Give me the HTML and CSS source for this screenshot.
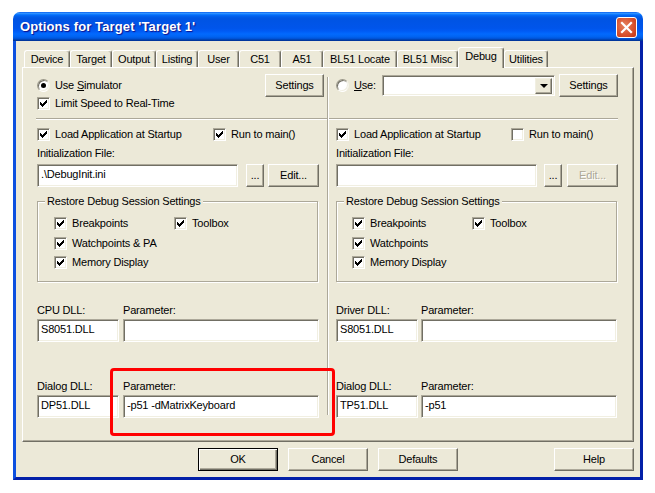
FILE: index.html
```html
<!DOCTYPE html>
<html lang="en">
<head>
<meta charset="utf-8">
<title>Options for Target 'Target 1'</title>
<link rel="stylesheet" href="styles.css">
</head>
<body>
<svg class="defs" width="0" height="0" aria-hidden="true"><symbol id="tick" viewBox="0 0 7 7"><path d="M0 2h1v3H0zM1 3h1v3H1zM2 4h1v3H2zM3 3h1v3H3zM4 2h1v3H4zM5 1h1v3H5zM6 0h1v3H6z"/></symbol></svg>
<div class="window">
  <header class="titlebar">
    <span class="title">Options for Target 'Target 1'</span>
    <span class="close"><svg width="13" height="13" viewBox="0 0 13 13"><path d="M2 2l9 9M11 2l-9 9" stroke="#fff" stroke-width="2.2" stroke-linecap="square" fill="none"/></svg></span>
  </header>
  <div class="client">
    <nav class="tabs">
      <span class="tab t-device">Device</span>
      <span class="tab t-target">Target</span>
      <span class="tab t-output">Output</span>
      <span class="tab t-listing">Listing</span>
      <span class="tab t-user">User</span>
      <span class="tab t-c51">C51</span>
      <span class="tab t-a51">A51</span>
      <span class="tab t-locate">BL51 Locate</span>
      <span class="tab t-misc">BL51 Misc</span>
      <span class="tab active t-debug">Debug</span>
      <span class="tab t-util">Utilities</span>
    </nav>
    <main class="panel">
      <div class="top">
        <section class="top-left">
          <div class="top-opts">
            <div class="opt"><span class="radio on"></span><span>Use <u>S</u>imulator</span></div>
            <div class="opt"><span class="box"><svg class="tick"><use href="#tick"/></svg></span><span>Limit Speed to Real-Time</span></div>
          </div>
          <button class="btn settings">Settings</button>
        </section>
        <section class="top-right">
          <div class="opt use"><span class="radio"></span><span><u>U</u>se:</span></div>
          <div class="combo"><span class="combo-arrow"><i></i></span></div>
          <button class="btn settings">Settings</button>
        </section>
      </div>
      <hr class="rule">
      <div class="cols">
        <section class="col">
          <div class="opt-row load">
            <div class="opt"><span class="box"><svg class="tick"><use href="#tick"/></svg></span><span>Load Application at Startup</span></div>
            <div class="opt"><span class="box"><svg class="tick"><use href="#tick"/></svg></span><span>Run to main()</span></div>
          </div>
          <div class="lbl init">Initialization File:</div>
          <div class="file-row">
            <input class="field file" value=".\DebugInit.ini">
            <button class="btn dots">...</button>
            <button class="btn edit">Edit...</button>
          </div>
          <fieldset class="group">
            <legend>Restore Debug Session Settings</legend>
            <div class="opt-row">
              <div class="opt"><span class="box"><svg class="tick"><use href="#tick"/></svg></span><span>Breakpoints</span></div>
              <div class="opt"><span class="box"><svg class="tick"><use href="#tick"/></svg></span><span>Toolbox</span></div>
            </div>
            <div class="opt second"><span class="box"><svg class="tick"><use href="#tick"/></svg></span><span>Watchpoints &amp; PA</span></div>
            <div class="opt third"><span class="box"><svg class="tick"><use href="#tick"/></svg></span><span>Memory Display</span></div>
          </fieldset>
          <div class="dll first">
            <div class="lbl">CPU DLL:</div><div class="lbl">Parameter:</div>
            <input class="field" value="S8051.DLL"><input class="field" value="">
          </div>
          <div class="dll">
            <div class="lbl">Dialog DLL:</div><div class="lbl">Parameter:</div>
            <input class="field" value="DP51.DLL"><input class="field" value="-p51 -dMatrixKeyboard">
          </div>
        </section>
        <section class="col col-right">
          <div class="opt-row load">
            <div class="opt"><span class="box"><svg class="tick"><use href="#tick"/></svg></span><span>Load Application at Startup</span></div>
            <div class="opt"><span class="box"></span><span>Run to main()</span></div>
          </div>
          <div class="lbl init">Initialization File:</div>
          <div class="file-row">
            <input class="field file" value="">
            <button class="btn dots">...</button>
            <button class="btn edit" disabled>Edit...</button>
          </div>
          <fieldset class="group">
            <legend>Restore Debug Session Settings</legend>
            <div class="opt-row">
              <div class="opt"><span class="box"><svg class="tick"><use href="#tick"/></svg></span><span>Breakpoints</span></div>
              <div class="opt"><span class="box"><svg class="tick"><use href="#tick"/></svg></span><span>Toolbox</span></div>
            </div>
            <div class="opt second"><span class="box"><svg class="tick"><use href="#tick"/></svg></span><span>Watchpoints</span></div>
            <div class="opt third"><span class="box"><svg class="tick"><use href="#tick"/></svg></span><span>Memory Display</span></div>
          </fieldset>
          <div class="dll first">
            <div class="lbl">Driver DLL:</div><div class="lbl">Parameter:</div>
            <input class="field" value="S8051.DLL"><input class="field" value="">
          </div>
          <div class="dll">
            <div class="lbl">Dialog DLL:</div><div class="lbl">Parameter:</div>
            <input class="field" value="TP51.DLL"><input class="field" value="-p51">
          </div>
        </section>
      </div>
      <div class="vline"></div>
      <div class="highlight"></div>
    </main>
    <footer class="footer">
      <button class="btn action default">OK</button>
      <button class="btn action">Cancel</button>
      <button class="btn action">Defaults</button>
      <button class="btn action help">Help</button>
    </footer>
  </div>
</div>
</body>
</html>
```
FILE: styles.css
```css
* { box-sizing: border-box; }
html, body { margin: 0; padding: 0; background: #fff; }
body {
  width: 655px; height: 493px; overflow: hidden;
  font: 11px/16px "Liberation Sans", Arial, sans-serif; color: #000; letter-spacing: -.18px;
}
.defs { display: block; height: 0; }
.window { margin: 12px 0 0 13px; width: 630px; height: 468px; display: flex; flex-direction: column; }

.titlebar {
  height: 29px; flex: none; display: flex; align-items: center; justify-content: space-between;
  padding: 0 6px 0 7px; border-radius: 7px 7px 0 0;
  background: linear-gradient(180deg,#0058ee 0,#3593ff 4%,#288eff 6%,#127dff 8%,#036ffc 10%,#0262ee 14%,#0057e5 20%,#0054e3 24%,#0055eb 56%,#005bf5 66%,#026afe 76%,#0062ef 86%,#0052d6 92%,#0040ab 96%,#003092 100%);
}
.title {
  font: bold 13px/16px "Liberation Sans", Arial, sans-serif; color: #fff;
  text-shadow: 1px 1px 1px #0f1089; letter-spacing: .12px; padding-top: 1px;
}
.close {
  width: 21px; height: 21px; display: flex; align-items: center; justify-content: center;
  border: 1px solid #fff; border-radius: 3px; margin-top: 1px;
  background: radial-gradient(circle at 40% 40%, #e5835f 0, #d9532f 55%, #c33414 100%);
}

.client {
  flex: 1; min-height: 0; background: #ece9d8; padding: 9px 0 0 6px;
  border-style: solid; border-width: 0 3px 3px;
  border-color: #0831d9 #0320a8 #0320a8 #0c50e0;
  display: flex; flex-direction: column;
}

.tabs { display: flex; align-items: flex-end; height: 17px; padding-left: 2px; position: relative; z-index: 1; }
.tab {
  height: 17px; text-align: center; line-height: 16px; background: #ece9d8;
  border: solid; border-width: 1px 1px 0 1px; border-color: #fff #716f64 #fff #fff;
  box-shadow: inset -1px 0 0 #aca899; border-radius: 3px 3px 0 0; flex: none; white-space: nowrap;
}
.t-device { width: 46px; }
.t-target { width: 42px; }
.t-output { width: 44px; }
.t-listing { width: 42px; }
.t-user { width: 41px; }
.t-c51 { width: 42px; }
.t-a51 { width: 42px; }
.t-locate { width: 74px; }
.t-misc { width: 61px; }
.t-debug { width: 46px; }
.t-util { width: 44px; }
.tab.active { height: 21px; margin-bottom: -1px; line-height: 17px; padding-bottom: 3px; }

.panel {
  position: relative; height: 375px; width: 612px; flex: none;
  border: 1px solid; border-color: #fff #716f64 #716f64 #fff;
  box-shadow: inset -1px -1px 0 #aca899; padding: 6px 0 0 14px;
}
.top { display: flex; height: 44px; }
.top-left { width: 287px; display: flex; justify-content: space-between; }
.top-opts { display: flex; flex-direction: column; gap: 2px; padding-top: 3px; }
.top-right { margin-left: 12px; width: 282px; display: flex; align-items: flex-start; }
.use { width: 46px; margin-top: 3px; }
.combo {
  width: 173px; height: 21px; margin-top: 1px; background: #fff; padding: 2px 2px 2px 0;
  border: 1px solid; border-color: #aca899 #fff #fff #aca899;
  box-shadow: inset 1px 1px 0 #716f64, inset -1px -1px 0 #f1efe2; display: flex; justify-content: flex-end;
}
.combo-arrow {
  width: 17px; height: 16px; background: #ece9d8; display: flex; align-items: center; justify-content: center;
  border: 1px solid; border-color: #f1efe2 #716f64 #716f64 #f1efe2; box-shadow: inset -1px -1px 0 #aca899;
}
.combo-arrow i { width: 0; height: 0; border: 4px solid transparent; border-top-color: #000; border-bottom-width: 0; }
.top-right .settings { margin-left: 4px; }

.rule { margin: 0 1px 0 -1px; height: 2px; width: 582px; border: 0; border-top: 1px solid #aca899; border-bottom: 1px solid #fff; }
.cols { display: grid; grid-template-columns: 282px 282px; column-gap: 17px; }
.opt { display: flex; align-items: center; gap: 5px; height: 16px; white-space: nowrap; }
.opt-row { display: flex; }
.opt-row > .opt:first-child { width: 120px; }
.load { margin-top: 6px; }
.load > .opt:first-child { width: 176px; }
.col-right .load > .opt:first-child { width: 175px; }
.box {
  width: 13px; height: 13px; flex: none; background: #fff; display: flex; align-items: center; justify-content: center;
  border: 1px solid; border-color: #aca899 #fff #fff #aca899;
  box-shadow: inset 1px 1px 0 #716f64, inset -1px -1px 0 #f1efe2;
}
.tick { width: 7px; height: 7px; fill: #000; shape-rendering: crispEdges; }
.radio {
  width: 13px; height: 13px; flex: none; border-radius: 50%; position: relative; background: #fff;
  border: 1px solid; border-color: #9a9788 #f5f4ea #fff #9a9788;
  box-shadow: inset 1px 1px 0 #716f64, inset -1px -1px 0 #f1efe2;
}
.radio.on::after {
  content: ""; position: absolute; left: 3px; top: 3px; width: 5px; height: 5px; border-radius: 50%; background: #000;
}
.lbl { height: 14px; line-height: 14px; white-space: nowrap; }
.init { margin-top: 4px; }
.field {
  display: block; width: 100%; height: 23px; margin: 0; padding: 0 3px 3px; background: #fff; outline: 0;
  font: inherit; letter-spacing: inherit; color: #000; border-radius: 0; appearance: none;
  border: 1px solid; border-color: #aca899 #fff #fff #aca899;
  box-shadow: inset 1px 1px 0 #716f64, inset -1px -1px 0 #f1efe2;
}
.file-row { display: flex; margin-top: 4px; }
.file { width: 201px; }
.btn {
  height: 23px; margin: 0; padding: 0 0 2px; background: #ece9d8; font: inherit; letter-spacing: inherit; color: #000; flex: none; border-radius: 0;
  border: 1px solid; border-color: #fff #716f64 #716f64 #fff; box-shadow: inset -1px -1px 0 #aca899;
}
.settings { width: 59px; }
.dots { width: 18px; margin: 0 4px 0 8px; }
.col-right .dots { margin: 0 5px 0 7px; }
.edit { width: 51px; }
.edit:disabled { color: #aca899; text-shadow: 1px 1px 0 #fff; }

.group {
  margin: 7px 0 0; padding: 7px 0 0 16px; height: 88px; width: 281px; min-width: 0;
  border: 1px solid #aca899; border-radius: 0;
  box-shadow: 1px 1px 0 #fff, inset 1px 1px 0 #fff;
}
.col-right .group { padding-left: 15px; }
.group legend { margin-left: -9px; padding: 0 2px; background: #ece9d8; line-height: 14px; height: 14px; }
.col-right .group legend { margin-left: -8px; }
.second { margin-top: 4px; }
.third { margin-top: 3px; }

.dll { display: grid; grid-template-columns: 82px 196px; column-gap: 4px; row-gap: 2px; margin-top: 37px; }
.dll.first { margin-top: 21px; }
.col-right .dll { grid-template-columns: 82px 196px; column-gap: 3px; }

.vline { position: absolute; left: 304px; top: 9px; width: 2px; height: 338px; border-left: 1px solid #aca899; border-right: 1px solid #fff; }
.highlight { position: absolute; left: 87px; top: 300px; width: 225px; height: 68px; border: 3px solid #f00; border-radius: 4px; }

.footer { display: flex; gap: 10px; margin-top: 6px; padding-left: 176px; width: 612px; }
.action { width: 80px; }
.help { margin-left: auto; }
.default { border: 1px solid #000; box-shadow: inset 1px 1px 0 #fff, inset -1px -1px 0 #716f64, inset -2px -2px 0 #aca899; }
```
